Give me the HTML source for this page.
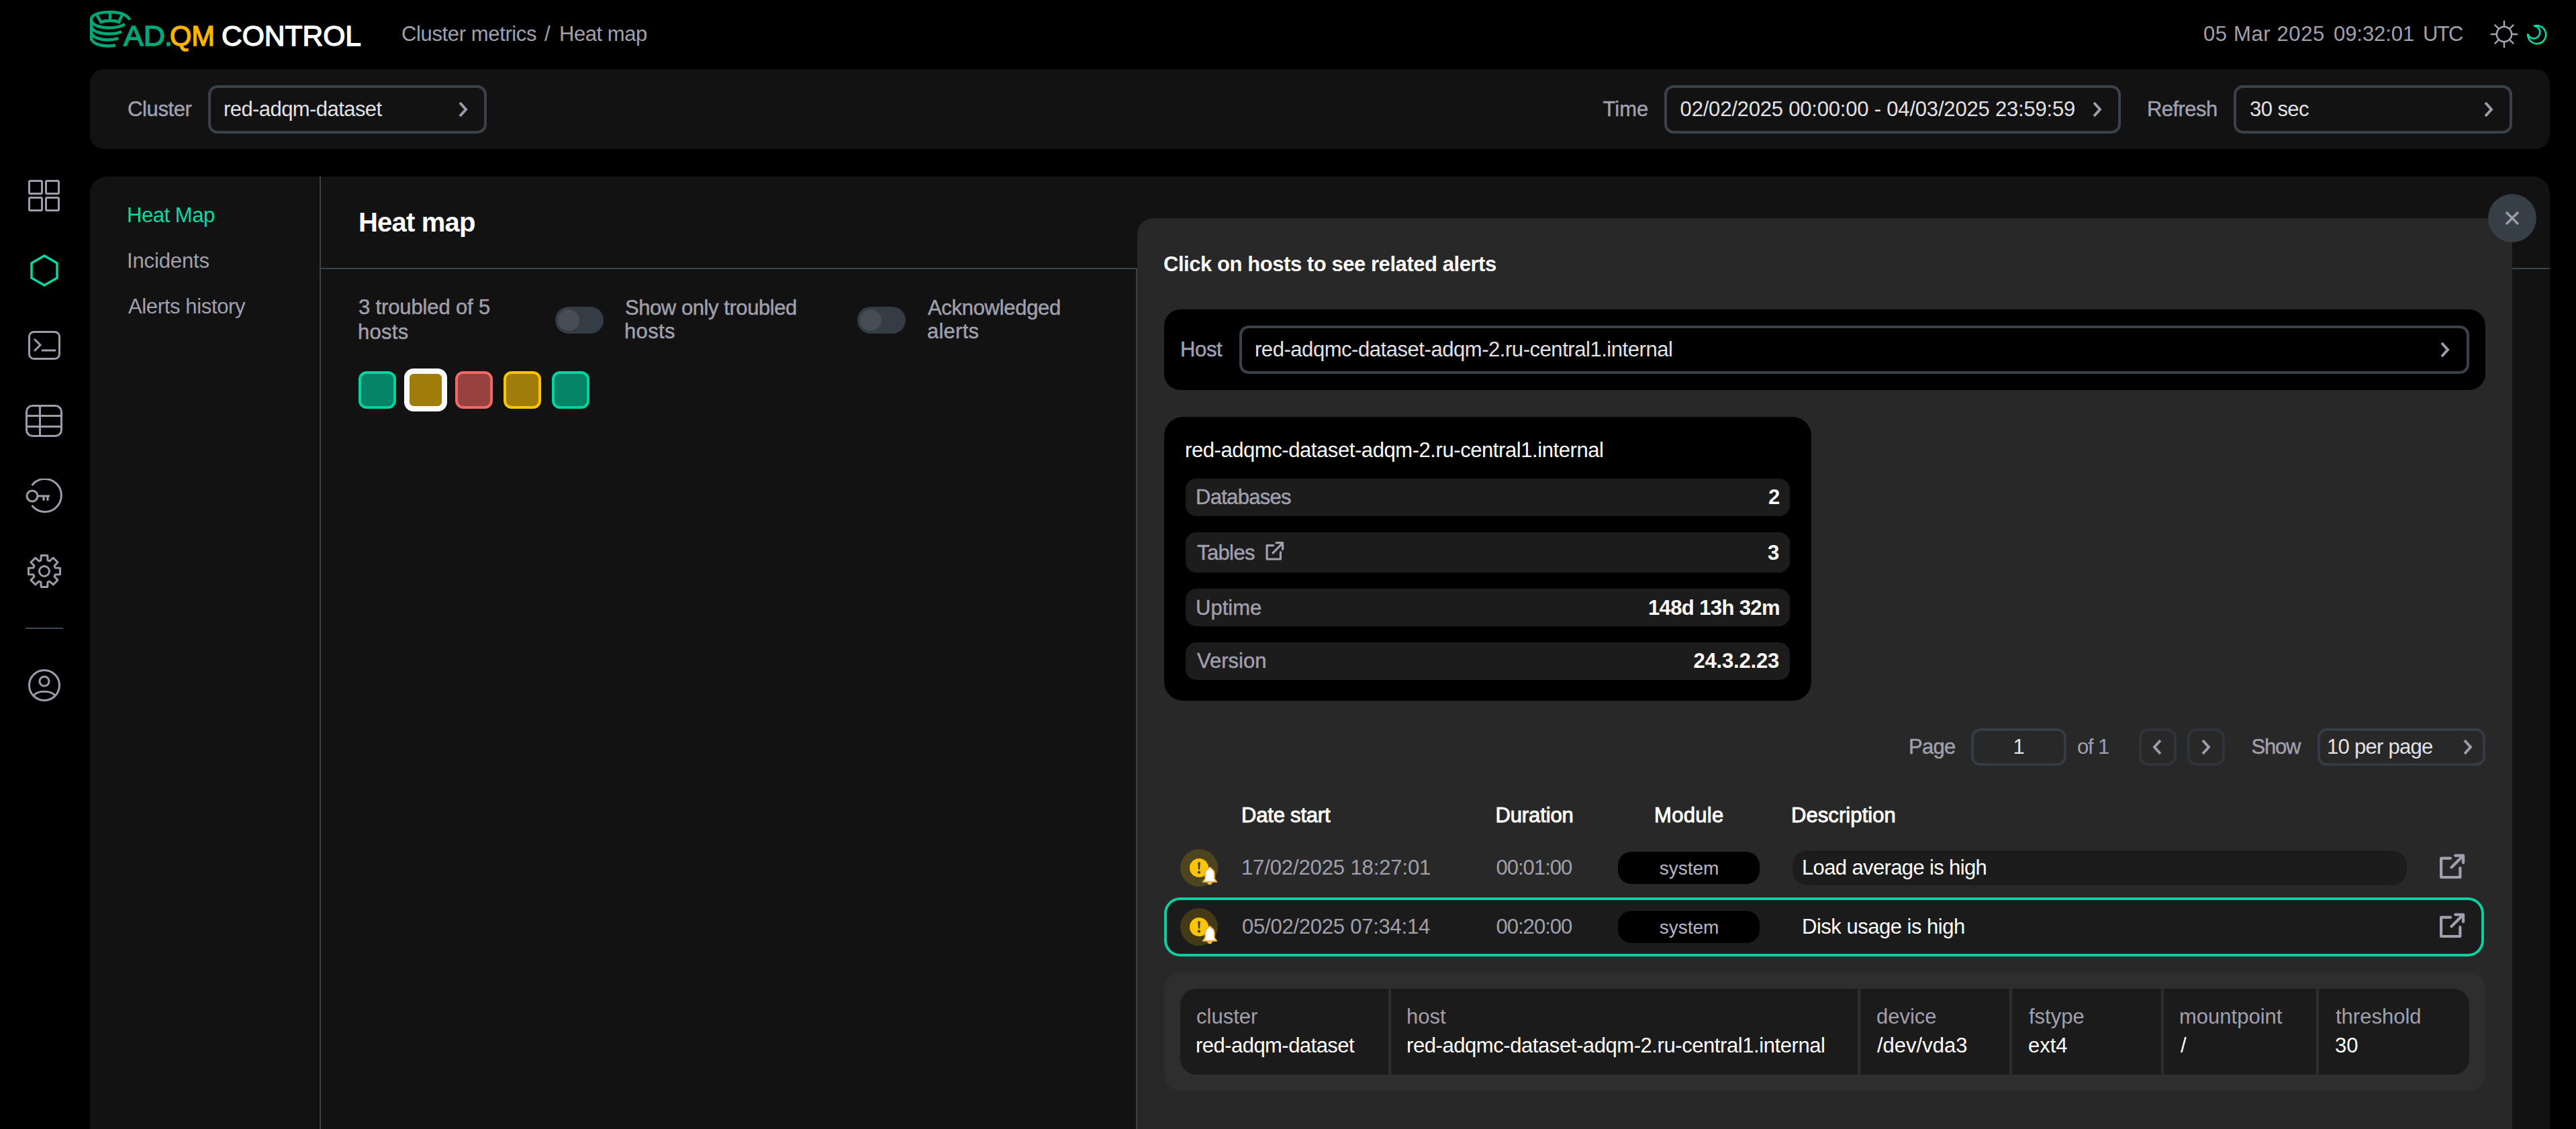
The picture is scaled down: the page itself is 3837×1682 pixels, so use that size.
<!DOCTYPE html>
<html><head><meta charset="utf-8"><title>Heat map</title>
<style>
html,body{margin:0;padding:0;background:#000;}
body{width:3837px;height:1682px;position:relative;overflow:hidden;font-family:"Liberation Sans",sans-serif;}
.t{position:absolute;line-height:1;white-space:nowrap;}
.r{position:absolute;}
</style></head><body>
<div class="r" style="left:134px;top:103px;width:3664px;height:119px;background:#121212;border-radius:21px;"></div>
<div class="r" style="left:134px;top:263px;width:3664px;height:1459px;background:#121212;border-radius:25px;"></div>
<div class="r" style="left:476px;top:263px;width:2px;height:1419px;background:#39414a;border-radius:0px;"></div>
<div class="r" style="left:478px;top:399px;width:3320px;height:2px;background:#39414a;border-radius:0px;"></div>
<div class="r" style="left:1692px;top:400px;width:2px;height:1282px;background:#39414a;border-radius:0px;"></div>
<svg class="r" style="left:130px;top:10px;" width="70" height="70" viewBox="0 0 70 70">
<g fill="none" stroke="#00a878" stroke-width="4.4" stroke-linecap="butt">
<path d="M63.5,19.5 C58,10 46,8 34,8 C20,8 6,11 6,19 L6,50"/>
<path d="M6,21 C8,28 20,31.5 32,31.5 C42,31.5 50,30 56,26"/>
<path d="M6,30 C8,37 20,40.5 32,40.5 C40,40.5 46,39.5 51,37"/>
<path d="M6,39 C8,46 20,49.5 30,49.5 C37,49.5 42,48.5 46.5,47"/>
<path d="M6,48 C8,55 20,58.5 30,58.5 C36,58.5 39,58 42,57.5"/>
<path d="M14,12 L20.5,23 C28,20 40,20 47,23 L52,12"/>
<path d="M34,9 L34,21"/>
</g></svg>
<svg class="r" style="left:180px;top:28px" width="370" height="50" viewBox="0 0 370 50"><g font-family="Liberation Sans" font-size="42" stroke-width="1.4"><text x="4" y="39.5" fill="#00a878" stroke="#00a878" textLength="62" lengthAdjust="spacingAndGlyphs">AD</text><text x="65" y="39.5" fill="#00a878" stroke="#00a878">.</text><text x="73" y="39.5" fill="#ffb400" stroke="#ffb400" textLength="67" lengthAdjust="spacingAndGlyphs">QM</text><text x="150" y="39.5" fill="#ffffff" stroke="#ffffff" textLength="208" lengthAdjust="spacingAndGlyphs">CONTROL</text></g></svg>
<div class="t" id="bc1" style="top:34.76px;font-size:31px;color:#a0a0ae;font-weight:400;letter-spacing:-0.371px;left:598.00px;">Cluster metrics</div>
<div class="t" id="bc2" style="top:34.76px;font-size:31px;color:#a0a0ae;font-weight:400;letter-spacing:0.000px;left:811.00px;">/</div>
<div class="t" id="bc3" style="top:34.76px;font-size:31px;color:#a0a0ae;font-weight:400;letter-spacing:-0.451px;left:833.00px;">Heat map</div>
<div class="t" id="dt1" style="top:34.76px;font-size:31px;color:#a0a0ae;font-weight:400;letter-spacing:0.618px;left:3282.00px;">05 Mar 2025</div>
<div class="t" id="dt2" style="top:34.76px;font-size:31px;color:#a0a0ae;font-weight:400;letter-spacing:-0.061px;left:3476.00px;">09:32:01</div>
<div class="t" id="dt3" style="top:34.76px;font-size:31px;color:#a0a0ae;font-weight:400;letter-spacing:-1.662px;left:3609.00px;">UTC</div>
<svg class="r" style="left:3709px;top:30px;" width="42" height="42" viewBox="0 0 42 42"><g stroke="#a4a4b2" stroke-width="2.4" fill="none" stroke-linecap="round"><circle cx="21" cy="21" r="11.2"/><line x1="33.80" y1="21.00" x2="40.20" y2="21.00"/><line x1="30.05" y1="30.05" x2="34.58" y2="34.58"/><line x1="21.00" y1="33.80" x2="21.00" y2="40.20"/><line x1="11.95" y1="30.05" x2="7.42" y2="34.58"/><line x1="8.20" y1="21.00" x2="1.80" y2="21.00"/><line x1="11.95" y1="11.95" x2="7.42" y2="7.42"/><line x1="21.00" y1="8.20" x2="21.00" y2="1.80"/><line x1="30.05" y1="11.95" x2="34.58" y2="7.42"/></g></svg>
<svg class="r" style="left:3755px;top:30px;" width="45" height="42" viewBox="0 0 45 42"><path d="M20,8.6 A13.5,13.5 0 1 1 10.2,21.3 A9.4,9.4 0 1 0 20,8.6 Z" fill="none" stroke="#05dca6" stroke-width="2.6" stroke-linejoin="round"/></svg>
<div class="t" id="fl1" style="top:146.76px;font-size:31px;color:#a0a0ae;font-weight:400;letter-spacing:-0.378px;-webkit-text-stroke:0.45px currentColor;left:190.00px;">Cluster</div>
<div class="r" style="left:310px;top:127px;width:415px;height:72px;background:#121212;border-radius:14px;border:4px solid #39414a;box-sizing:border-box;"></div>
<div class="t" id="fv1" style="top:146.76px;font-size:31px;color:#e2e2e8;font-weight:400;letter-spacing:-0.571px;left:333.00px;">red-adqm-dataset</div>
<svg class="r" style="left:683px;top:151px;" width="14" height="24" viewBox="0 0 14 24"><path d="M2,2 L11,12 L2,22" fill="none" stroke="#9c9cab" stroke-width="4" stroke-linecap="butt" stroke-linejoin="miter"/></svg>
<div class="t" id="fl2" style="top:146.76px;font-size:31px;color:#a0a0ae;font-weight:400;letter-spacing:0.001px;-webkit-text-stroke:0.45px currentColor;left:2387.50px;">Time</div>
<div class="r" style="left:2479px;top:127px;width:680px;height:72px;background:#121212;border-radius:14px;border:4px solid #39414a;box-sizing:border-box;"></div>
<div class="t" id="fv2" style="top:146.76px;font-size:31px;color:#e2e2e8;font-weight:400;letter-spacing:-0.194px;left:2502.60px;">02/02/2025 00:00:00 - 04/03/2025 23:59:59</div>
<svg class="r" style="left:3117px;top:151px;" width="14" height="24" viewBox="0 0 14 24"><path d="M2,2 L11,12 L2,22" fill="none" stroke="#9c9cab" stroke-width="4" stroke-linecap="butt" stroke-linejoin="miter"/></svg>
<div class="t" id="fl3" style="top:146.76px;font-size:31px;color:#a0a0ae;font-weight:400;letter-spacing:-0.551px;-webkit-text-stroke:0.45px currentColor;left:3198.00px;">Refresh</div>
<div class="r" style="left:3327px;top:127px;width:415px;height:72px;background:#121212;border-radius:14px;border:4px solid #39414a;box-sizing:border-box;"></div>
<div class="t" id="fv3" style="top:146.76px;font-size:31px;color:#e2e2e8;font-weight:400;letter-spacing:-0.567px;left:3351.00px;">30 sec</div>
<svg class="r" style="left:3700px;top:151px;" width="14" height="24" viewBox="0 0 14 24"><path d="M2,2 L11,12 L2,22" fill="none" stroke="#9c9cab" stroke-width="4" stroke-linecap="butt" stroke-linejoin="miter"/></svg>
<svg class="r" style="left:42px;top:268px;" width="47" height="47" viewBox="0 0 47 47"><g fill="none" stroke="#9c9cab" stroke-width="3"><rect x="1.5" y="1.5" width="19" height="19" rx="1.5"/><rect x="26.5" y="1.5" width="19" height="19" rx="1.5"/><rect x="1.5" y="26.5" width="19" height="19" rx="1.5"/><rect x="26.5" y="26.5" width="19" height="19" rx="1.5"/></g></svg>
<svg class="r" style="left:45px;top:379px;" width="42" height="48" viewBox="0 0 42 48"><polygon points="21,2 40,13 40,35 21,46 2,35 2,13" fill="none" stroke="#05d8a4" stroke-width="3.5"/></svg>
<svg class="r" style="left:42px;top:493px;" width="48" height="43" viewBox="0 0 48 43"><g fill="none" stroke="#9c9cab" stroke-width="3" stroke-linecap="round"><rect x="1.5" y="1.5" width="45" height="40" rx="7"/><path d="M10,13 L18,21 L10,29"/><path d="M21,29 L40,29"/></g></svg>
<svg class="r" style="left:38px;top:603px;" width="55" height="48" viewBox="0 0 55 48"><g fill="none" stroke="#9c9cab" stroke-width="3"><rect x="1.5" y="1.5" width="52" height="45" rx="9"/><path d="M1.5,16.5 L53.5,16.5 M1.5,32.5 L53.5,32.5 M21.5,1.5 L21.5,46.5"/></g></svg>
<svg class="r" style="left:38px;top:713px;" width="60" height="53" viewBox="0 0 60 53"><g fill="none" stroke="#9c9cab" stroke-width="3"><path d="M9.5,10 A24.5,24.5 0 1 1 9.5,40"/><circle cx="10" cy="26" r="8"/><path d="M18,26 L36,26 M27,26 L27,33 M33,26 L33,33"/></g></svg>
<svg class="r" style="left:40px;top:825px;" width="52" height="52" viewBox="0 0 52 52"><g fill="none" stroke="#9c9cab" stroke-width="3" stroke-linejoin="round"><polygon points="42.24,20.98 49.52,21.23 49.52,30.77 42.24,31.02 41.04,33.93 46.00,39.26 39.26,46.00 33.93,41.04 31.02,42.24 30.77,49.52 21.23,49.52 20.98,42.24 18.07,41.04 12.74,46.00 6.00,39.26 10.96,33.93 9.76,31.02 2.48,30.77 2.48,21.23 9.76,20.98 10.96,18.07 6.00,12.74 12.74,6.00 18.07,10.96 20.98,9.76 21.23,2.48 30.77,2.48 31.02,9.76 33.93,10.96 39.26,6.00 46.00,12.74 41.04,18.07"/><circle cx="26" cy="26" r="7.5"/></g></svg>
<div class="r" style="left:38px;top:935px;width:56px;height:2px;background:#3e4650;border-radius:0px;"></div>
<svg class="r" style="left:42px;top:997px;" width="48" height="48" viewBox="0 0 48 48"><g fill="none" stroke="#9c9cab" stroke-width="3"><circle cx="24" cy="24" r="22.5"/><circle cx="24" cy="18" r="7"/><path d="M8,40 C12,31 36,31 40,40"/></g></svg>
<div class="t" id="nv1" style="top:305.26px;font-size:31px;color:#05dca6;font-weight:400;letter-spacing:-0.451px;left:189.00px;">Heat Map</div>
<div class="t" id="nv2" style="top:372.76px;font-size:31px;color:#a0a0ae;font-weight:400;letter-spacing:-0.122px;left:189.00px;">Incidents</div>
<div class="t" id="nv3" style="top:441.26px;font-size:31px;color:#a0a0ae;font-weight:400;letter-spacing:-0.358px;left:191.00px;">Alerts history</div>
<div class="t" id="h1" style="top:311.14px;font-size:40px;color:#ffffff;font-weight:700;letter-spacing:-0.804px;left:534.00px;">Heat map</div>
<div class="t" id="tg1" style="top:442.36px;font-size:31px;color:#a0a0ae;font-weight:400;letter-spacing:-0.140px;-webkit-text-stroke:0.45px currentColor;left:534.00px;">3 troubled of 5</div>
<div class="t" id="tg2" style="top:478.76px;font-size:31px;color:#a0a0ae;font-weight:400;letter-spacing:0.276px;-webkit-text-stroke:0.45px currentColor;left:533.00px;">hosts</div>
<div class="t" id="tg3" style="top:442.76px;font-size:31px;color:#a0a0ae;font-weight:400;letter-spacing:-0.437px;-webkit-text-stroke:0.45px currentColor;left:931.00px;">Show only troubled</div>
<div class="t" id="tg4" style="top:477.76px;font-size:31px;color:#a0a0ae;font-weight:400;letter-spacing:0.351px;-webkit-text-stroke:0.45px currentColor;left:930.00px;">hosts</div>
<div class="t" id="tg5" style="top:442.76px;font-size:31px;color:#a0a0ae;font-weight:400;letter-spacing:-0.309px;-webkit-text-stroke:0.45px currentColor;left:1382.00px;">Acknowledged</div>
<div class="t" id="tg6" style="top:477.76px;font-size:31px;color:#a0a0ae;font-weight:400;letter-spacing:0.239px;-webkit-text-stroke:0.45px currentColor;left:1381.00px;">alerts</div>
<div class="r" style="left:827px;top:457px;width:72px;height:40px;background:#353c45;border-radius:20px;"></div>
<div class="r" style="left:831px;top:461px;width:32px;height:32px;background:#474d54;border-radius:16px;"></div>
<div class="r" style="left:1277px;top:457px;width:72px;height:40px;background:#353c45;border-radius:20px;"></div>
<div class="r" style="left:1281px;top:461px;width:32px;height:32px;background:#474d54;border-radius:16px;"></div>
<div class="r" style="left:534px;top:553px;width:56px;height:56px;background:#068468;border-radius:12px;border:4px solid #00d4a0;box-sizing:border-box;"></div>
<div class="r" style="left:602px;top:549px;width:64px;height:64px;background:#a07c0a;border-radius:14px;border:8px solid #fafafa;box-sizing:border-box;"></div>
<div class="r" style="left:678px;top:553px;width:56px;height:56px;background:#974141;border-radius:12px;border:4px solid #f06868;box-sizing:border-box;"></div>
<div class="r" style="left:750px;top:553px;width:56px;height:56px;background:#a07c0a;border-radius:12px;border:4px solid #ffc400;box-sizing:border-box;"></div>
<div class="r" style="left:822px;top:553px;width:56px;height:56px;background:#068468;border-radius:12px;border:4px solid #00d4a0;box-sizing:border-box;"></div>
<div class="r" style="left:1694px;top:325px;width:2048px;height:1397px;background:#282828;border-radius:24px;"></div>
<div class="t" id="m1" style="top:377.76px;font-size:31px;color:#ffffff;font-weight:700;letter-spacing:-0.441px;left:1733.00px;">Click on hosts to see related alerts</div>
<div class="r" style="left:1734px;top:461px;width:1968px;height:120px;background:#000000;border-radius:24px;"></div>
<div class="t" id="m2" style="top:504.76px;font-size:31px;color:#a0a0ae;font-weight:400;letter-spacing:-0.376px;-webkit-text-stroke:0.45px currentColor;left:1758.00px;">Host</div>
<div class="r" style="left:1846px;top:485px;width:1832px;height:72px;background:#000000;border-radius:14px;border:4px solid #39414a;box-sizing:border-box;"></div>
<div class="t" id="m3" style="top:504.76px;font-size:31px;color:#e2e2e8;font-weight:400;letter-spacing:-0.450px;left:1869.00px;">red-adqmc-dataset-adqm-2.ru-central1.internal</div>
<svg class="r" style="left:3635px;top:509px;" width="14" height="24" viewBox="0 0 14 24"><path d="M2,2 L11,12 L2,22" fill="none" stroke="#9c9cab" stroke-width="4" stroke-linecap="butt" stroke-linejoin="miter"/></svg>
<div class="r" style="left:3706px;top:289px;width:72px;height:72px;background:#363e48;border-radius:36px;"></div>
<svg class="r" style="left:3730px;top:313px;" width="24" height="24" viewBox="0 0 24 24"><path d="M3,3 L21,21 M21,3 L3,21" stroke="#9c9cab" stroke-width="3.5"/></svg>
<div class="r" style="left:1734px;top:621px;width:964px;height:423px;background:#000000;border-radius:28px;"></div>
<div class="t" id="c0" style="top:654.76px;font-size:31px;color:#ffffff;font-weight:400;letter-spacing:-0.427px;left:1765.00px;">red-adqmc-dataset-adqm-2.ru-central1.internal</div>
<div class="r" style="left:1766px;top:713px;width:900px;height:56px;background:#1c1c1c;border-radius:16px;"></div>
<div class="t" id="cl0" style="top:724.76px;font-size:31px;color:#a0a0ae;font-weight:400;letter-spacing:-0.713px;-webkit-text-stroke:0.45px currentColor;left:1781.00px;">Databases</div>
<div class="t" id="cv0" style="top:724.76px;font-size:31px;color:#ffffff;font-weight:700;letter-spacing:0.000px;right:1185.76px;">2</div>
<div class="r" style="left:1766px;top:793px;width:900px;height:60px;background:#1c1c1c;border-radius:16px;"></div>
<div class="t" id="cl1" style="top:807.76px;font-size:31px;color:#a0a0ae;font-weight:400;letter-spacing:-0.622px;-webkit-text-stroke:0.45px currentColor;left:1783.00px;">Tables</div>
<div class="t" id="cv1" style="top:807.76px;font-size:31px;color:#ffffff;font-weight:700;letter-spacing:0.000px;right:1186.76px;">3</div>
<div class="r" style="left:1766px;top:877px;width:900px;height:56px;background:#1c1c1c;border-radius:16px;"></div>
<div class="t" id="cl2" style="top:889.76px;font-size:31px;color:#a0a0ae;font-weight:400;letter-spacing:0.000px;-webkit-text-stroke:0.45px currentColor;left:1781.00px;">Uptime</div>
<div class="t" id="cv2" style="top:889.76px;font-size:31px;color:#ffffff;font-weight:700;letter-spacing:-0.617px;right:1186.05px;">148d 13h 32m</div>
<div class="r" style="left:1766px;top:957px;width:900px;height:56px;background:#1c1c1c;border-radius:16px;"></div>
<div class="t" id="cl3" style="top:968.76px;font-size:31px;color:#a0a0ae;font-weight:400;letter-spacing:0.000px;-webkit-text-stroke:0.45px currentColor;left:1783.00px;">Version</div>
<div class="t" id="cv3" style="top:968.76px;font-size:31px;color:#ffffff;font-weight:700;letter-spacing:-0.193px;right:1186.95px;">24.3.2.23</div>
<svg class="r" style="left:1880px;top:800px;" width="40" height="40" viewBox="0 0 40 40"><g fill="none" stroke="#a0a0ae" stroke-width="3.2" stroke-linecap="round" stroke-linejoin="round"><path d="M16.8,12.6 L7.1,12.6 L7.1,33 L27.4,33 L27.4,22.5"/><path d="M16,23.8 L30,9.6 M21,8.7 L30.6,8.7 L30.6,18.3"/></g></svg>
<div class="t" id="p1" style="top:1096.76px;font-size:31px;color:#a0a0ae;font-weight:400;letter-spacing:-0.719px;-webkit-text-stroke:0.45px currentColor;left:2843.00px;">Page</div>
<div class="r" style="left:2936px;top:1085px;width:142px;height:56px;background:#282828;border-radius:14px;border:4px solid #343c45;box-sizing:border-box;"></div>
<div class="t" id="p2" style="top:1096.76px;font-size:31px;color:#e2e2e8;font-weight:400;letter-spacing:0.000px;left:2607px;width:800px;text-align:center;">1</div>
<div class="t" id="p3" style="top:1096.76px;font-size:31px;color:#a0a0ae;font-weight:400;letter-spacing:-1.155px;left:3094.00px;">of 1</div>
<div class="r" style="left:3186px;top:1085px;width:56px;height:56px;background:#282828;border-radius:14px;border:4px solid #30343a;box-sizing:border-box;"></div>
<svg class="r" style="left:3206px;top:1101px;" width="14" height="24" viewBox="0 0 14 24"><path d="M12,2 L3,12 L12,22" fill="none" stroke="#9c9cab" stroke-width="4" stroke-linecap="butt" stroke-linejoin="miter"/></svg>
<div class="r" style="left:3258px;top:1085px;width:56px;height:56px;background:#282828;border-radius:14px;border:4px solid #30343a;box-sizing:border-box;"></div>
<svg class="r" style="left:3279px;top:1101px;" width="14" height="24" viewBox="0 0 14 24"><path d="M2,2 L11,12 L2,22" fill="none" stroke="#9c9cab" stroke-width="4" stroke-linecap="butt" stroke-linejoin="miter"/></svg>
<div class="t" id="p4" style="top:1096.76px;font-size:31px;color:#a0a0ae;font-weight:400;letter-spacing:-1.219px;-webkit-text-stroke:0.45px currentColor;left:3353.50px;">Show</div>
<div class="r" style="left:3452px;top:1085px;width:250px;height:56px;background:#282828;border-radius:14px;border:4px solid #343c45;box-sizing:border-box;"></div>
<div class="t" id="p5" style="top:1096.76px;font-size:31px;color:#e2e2e8;font-weight:400;letter-spacing:-0.723px;left:3466.00px;">10 per page</div>
<svg class="r" style="left:3669px;top:1101px;" width="14" height="24" viewBox="0 0 14 24"><path d="M2,2 L11,12 L2,22" fill="none" stroke="#9c9cab" stroke-width="4" stroke-linecap="butt" stroke-linejoin="miter"/></svg>
<div class="t" id="th1" style="top:1198.76px;font-size:31px;color:#ffffff;font-weight:400;letter-spacing:-0.197px;-webkit-text-stroke:0.9px currentColor;left:1849.00px;">Date start</div>
<div class="t" id="th2" style="top:1198.76px;font-size:31px;color:#ffffff;font-weight:400;letter-spacing:-0.133px;-webkit-text-stroke:0.9px currentColor;left:2227.50px;">Duration</div>
<div class="t" id="th3" style="top:1198.76px;font-size:31px;color:#ffffff;font-weight:400;letter-spacing:0.313px;-webkit-text-stroke:0.9px currentColor;left:2464.00px;">Module</div>
<div class="t" id="th4" style="top:1198.76px;font-size:31px;color:#ffffff;font-weight:400;letter-spacing:0.078px;-webkit-text-stroke:0.9px currentColor;left:2668.00px;">Description</div>
<div class="r" style="left:1758px;top:1265px;width:56px;height:56px;background:rgba(255,200,0,0.18);border-radius:28px;"></div>
<svg class="r" style="left:1772px;top:1279px;" width="28" height="28" viewBox="0 0 28 28"><circle cx="14" cy="14" r="14" fill="#ffc400"/><path d="M12.2,5.5 L15.8,5.5 L15.1,16.5 L12.9,16.5 Z" fill="#333c48"/><circle cx="14" cy="20.6" r="2.1" fill="#333c48"/></svg>
<svg class="r" style="left:1790px;top:1290px;" width="24" height="29" viewBox="0 0 24 29"><path d="M12,2.2 C9.8,2.2 9.6,4.2 9.4,4.6 C6.5,5.6 5.2,8.5 5.2,12 L5.2,19 L1.8,23.8 L22.2,23.8 L18.8,19 L18.8,12 C18.8,8.5 17.5,5.6 14.6,4.6 C14.4,4.2 14.2,2.2 12,2.2 Z" fill="#ffffff" stroke="#f0b040" stroke-width="1.9" stroke-linejoin="round"/><path d="M9.2,24.8 C9.2,28 14.8,28 14.8,24.8 Z" fill="#ffffff" stroke="#f0b040" stroke-width="1.9"/></svg>
<div class="t" id="r1a" style="top:1276.76px;font-size:31px;color:#a0a0ae;font-weight:400;letter-spacing:-0.122px;left:1849.00px;">17/02/2025 18:27:01</div>
<div class="t" id="r1b" style="top:1276.76px;font-size:31px;color:#a0a0ae;font-weight:400;letter-spacing:-0.990px;left:2228.50px;">00:01:00</div>
<div class="r" style="left:2410px;top:1269px;width:211px;height:48px;background:#000000;border-radius:20px;"></div>
<div class="t" id="r1c" style="top:1280.30px;font-size:28px;color:#b6b6c4;font-weight:400;letter-spacing:0.000px;left:2116px;width:800px;text-align:center;">system</div>
<div class="r" style="left:2670px;top:1267px;width:915px;height:52px;background:#1c1c1c;border-radius:22px;"></div>
<div class="t" id="r1d" style="top:1276.76px;font-size:31px;color:#ffffff;font-weight:400;letter-spacing:-0.631px;left:2684.00px;">Load average is high</div>
<svg class="r" style="left:3620px;top:1260px;" width="60" height="60" viewBox="0 0 60 60"><g fill="none" stroke="#a0a0ae" stroke-width="4.2" stroke-linecap="round" stroke-linejoin="round"><path d="M30,18.7 L16.1,18.7 L16.1,47 L44.4,47 L44.4,33"/><path d="M31.5,32.3 L48.5,15.2 M37.2,14.6 L49.1,14.6 L49.1,25.2"/></g></svg>
<div class="r" style="left:1734px;top:1337px;width:1966px;height:88px;background:#1b1b1b;border-radius:24px;border:4px solid #0cd0a0;box-sizing:border-box;"></div>
<div class="r" style="left:1758px;top:1353px;width:56px;height:56px;background:rgba(255,200,0,0.18);border-radius:28px;"></div>
<svg class="r" style="left:1772px;top:1367px;" width="28" height="28" viewBox="0 0 28 28"><circle cx="14" cy="14" r="14" fill="#ffc400"/><path d="M12.2,5.5 L15.8,5.5 L15.1,16.5 L12.9,16.5 Z" fill="#333c48"/><circle cx="14" cy="20.6" r="2.1" fill="#333c48"/></svg>
<svg class="r" style="left:1790px;top:1378px;" width="24" height="29" viewBox="0 0 24 29"><path d="M12,2.2 C9.8,2.2 9.6,4.2 9.4,4.6 C6.5,5.6 5.2,8.5 5.2,12 L5.2,19 L1.8,23.8 L22.2,23.8 L18.8,19 L18.8,12 C18.8,8.5 17.5,5.6 14.6,4.6 C14.4,4.2 14.2,2.2 12,2.2 Z" fill="#ffffff" stroke="#f0b040" stroke-width="1.9" stroke-linejoin="round"/><path d="M9.2,24.8 C9.2,28 14.8,28 14.8,24.8 Z" fill="#ffffff" stroke="#f0b040" stroke-width="1.9"/></svg>
<div class="t" id="r2a" style="top:1364.76px;font-size:31px;color:#a0a0ae;font-weight:400;letter-spacing:-0.233px;left:1850.00px;">05/02/2025 07:34:14</div>
<div class="t" id="r2b" style="top:1364.76px;font-size:31px;color:#a0a0ae;font-weight:400;letter-spacing:-0.990px;left:2228.50px;">00:20:00</div>
<div class="r" style="left:2410px;top:1357px;width:211px;height:48px;background:#000000;border-radius:20px;"></div>
<div class="t" id="r2c" style="top:1368.30px;font-size:28px;color:#b6b6c4;font-weight:400;letter-spacing:0.000px;left:2116px;width:800px;text-align:center;">system</div>
<div class="t" id="r2d" style="top:1364.76px;font-size:31px;color:#ffffff;font-weight:400;letter-spacing:-0.490px;left:2684.00px;">Disk usage is high</div>
<svg class="r" style="left:3620px;top:1348px;" width="60" height="60" viewBox="0 0 60 60"><g fill="none" stroke="#a0a0ae" stroke-width="4.2" stroke-linecap="round" stroke-linejoin="round"><path d="M30,18.7 L16.1,18.7 L16.1,47 L44.4,47 L44.4,33"/><path d="M31.5,32.3 L48.5,15.2 M37.2,14.6 L49.1,14.6 L49.1,25.2"/></g></svg>
<div class="r" style="left:1734px;top:1449px;width:1968px;height:176px;background:#2e2e2e;border-radius:24px;"></div>
<div class="r" style="left:1758px;top:1473px;width:1920px;height:128px;background:#2e2e2e;border-radius:24px;border:overflow:hidden;;box-sizing:border-box;"></div>
<div class="r" style="left:1758px;top:1473px;width:310px;height:128px;background:#1b1b1b;border-radius:24px 0px 0px 24px"></div>
<div class="t" id="kl0" style="top:1498.76px;font-size:31px;color:#a0a0ae;font-weight:400;letter-spacing:0.000px;left:1782.00px;">cluster</div>
<div class="t" id="kv0" style="top:1542.26px;font-size:31px;color:#ffffff;font-weight:400;letter-spacing:-0.538px;left:1781.00px;">red-adqm-dataset</div>
<div class="r" style="left:2072px;top:1473px;width:695px;height:128px;background:#1b1b1b;border-radius:0px 0px 0px 0px"></div>
<div class="t" id="kl1" style="top:1498.76px;font-size:31px;color:#a0a0ae;font-weight:400;letter-spacing:0.000px;left:2095.00px;">host</div>
<div class="t" id="kv1" style="top:1542.26px;font-size:31px;color:#ffffff;font-weight:400;letter-spacing:-0.427px;left:2095.00px;">red-adqmc-dataset-adqm-2.ru-central1.internal</div>
<div class="r" style="left:2771px;top:1473px;width:222px;height:128px;background:#1b1b1b;border-radius:0px 0px 0px 0px"></div>
<div class="t" id="kl2" style="top:1498.76px;font-size:31px;color:#a0a0ae;font-weight:400;letter-spacing:0.000px;left:2795.00px;">device</div>
<div class="t" id="kv2" style="top:1542.26px;font-size:31px;color:#ffffff;font-weight:400;letter-spacing:0.000px;left:2796.00px;">/dev/vda3</div>
<div class="r" style="left:2997px;top:1473px;width:222px;height:128px;background:#1b1b1b;border-radius:0px 0px 0px 0px"></div>
<div class="t" id="kl3" style="top:1498.76px;font-size:31px;color:#a0a0ae;font-weight:400;letter-spacing:0.000px;left:3022.00px;">fstype</div>
<div class="t" id="kv3" style="top:1542.26px;font-size:31px;color:#ffffff;font-weight:400;letter-spacing:0.000px;left:3021.00px;">ext4</div>
<div class="r" style="left:3223px;top:1473px;width:227px;height:128px;background:#1b1b1b;border-radius:0px 0px 0px 0px"></div>
<div class="t" id="kl4" style="top:1498.76px;font-size:31px;color:#a0a0ae;font-weight:400;letter-spacing:0.000px;left:3246.00px;">mountpoint</div>
<div class="t" id="kv4" style="top:1542.26px;font-size:31px;color:#ffffff;font-weight:400;letter-spacing:0.000px;left:3248.00px;">/</div>
<div class="r" style="left:3454px;top:1473px;width:224px;height:128px;background:#1b1b1b;border-radius:0px 24px 24px 0px"></div>
<div class="t" id="kl5" style="top:1498.76px;font-size:31px;color:#a0a0ae;font-weight:400;letter-spacing:0.000px;left:3479.00px;">threshold</div>
<div class="t" id="kv5" style="top:1542.26px;font-size:31px;color:#ffffff;font-weight:400;letter-spacing:0.000px;left:3478.00px;">30</div>
</body></html>
